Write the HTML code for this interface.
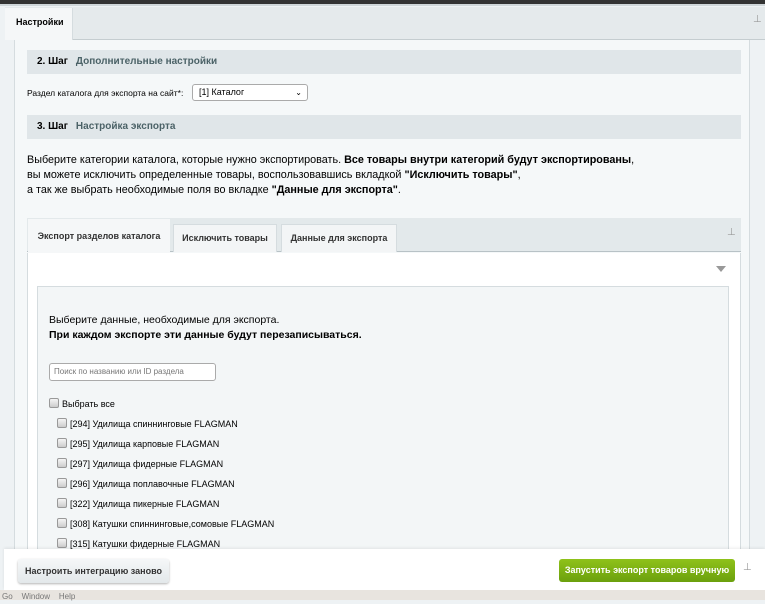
<!DOCTYPE html>
<html><head><meta charset="utf-8"><style>
*{margin:0;padding:0;box-sizing:border-box}
body{width:765px;height:600px;overflow:hidden;background:#eef2f4;font-family:"Liberation Sans",Arial,sans-serif;font-size:12px;color:#000;position:relative}
.abs{position:absolute}
.hdr{position:absolute;left:27px;width:714px;height:24px;background:#e0e6e9;font-size:10px;line-height:24px;padding-left:10px}
.hdr b{margin-right:8px}
.hdr span{color:#4b6267;font-weight:bold}
.cb{display:inline-block;width:10px;height:10px;border:1px solid #999;border-radius:2px;background:linear-gradient(#f5f5f5,#ccc);vertical-align:-1px;margin-right:3px}
.item{position:absolute;left:57px;font-size:9px}
.tab{position:absolute;top:224px;height:28px;background:#f3f5f6;border:1px solid #d5dcdf;border-bottom:none;font-size:9px;font-weight:bold;line-height:26px;text-align:center;color:#333}
</style></head><body>
<div class="abs" style="left:0;top:0;width:765px;height:4px;background:#333"></div>
<div class="abs" style="left:0;top:4px;width:765px;height:2px;background:#cfd6d9"></div>
<div class="abs" style="left:5px;top:7px;width:760px;height:33px;background:#e5eaec;border-bottom:1px solid #c5cdd0"></div>
<div class="abs" style="left:5px;top:8px;width:68px;height:32px;background:#f5f7f8;border-right:1px solid #d5dcdf;font-size:9px;font-weight:bold;line-height:28px;padding-left:11px">Настройки</div>
<div class="abs" style="left:753px;top:14px;font-size:10px;color:#999">⊥</div>
<div class="abs" style="left:14px;top:40px;width:736px;height:510px;background:#f5f8f9;border-left:1px solid #d5dcdf;border-right:1px solid #d5dcdf"></div>
<div class="hdr" style="top:50px"><b>2. Шаг</b><span>Дополнительные настройки</span></div>
<div class="abs" style="left:27px;top:88px;font-size:8.5px">Раздел каталога для экспорта на сайт*:</div>
<div class="abs" style="left:192px;top:84px;width:116px;height:17px;background:#fff;border:1px solid #aaa;border-radius:3px;font-size:9px;line-height:15px;padding-left:6px">[1] Каталог<span style="position:absolute;right:5px;font-size:8px">⌄</span></div>
<div class="hdr" style="top:115px"><b>3. Шаг</b><span>Настройка экспорта</span></div>
<div class="abs" style="left:27px;top:153px;font-size:10.8px;line-height:15px">Выберите категории каталога, которые нужно экспортировать. <b>Все товары внутри категорий будут экспортированы</b>,<br>вы можете исключить определенные товары, воспользовавшись вкладкой <b>"Исключить товары"</b>,<br>а так же выбрать необходимые поля во вкладке <b>"Данные для экспорта"</b>.</div>
<div class="abs" style="left:27px;top:218px;width:714px;height:34px;background:#e3e9eb;border-bottom:1px solid #b8c2c6"></div>
<div class="tab" style="left:28px;top:219px;height:34px;width:142px;background:#f5f7f8;line-height:34px;border:none">Экспорт разделов каталога</div>
<div class="tab" style="left:173px;width:104px">Исключить товары</div>
<div class="tab" style="left:281px;width:116px">Данные для экспорта</div>
<div class="abs" style="left:727px;top:227px;font-size:10px;color:#999">⊥</div>
<div class="abs" style="left:27px;top:253px;width:714px;height:300px;background:#fff;border-left:1px solid #d5dcdf;border-right:1px solid #d5dcdf"></div>
<div class="abs" style="left:716px;top:266px;width:0;height:0;border-left:5px solid transparent;border-right:5px solid transparent;border-top:6px solid #999"></div>
<div class="abs" style="left:37px;top:286px;width:692px;height:270px;background:#f3f6f7;border:1px solid #d5dcdf"></div>
<div class="abs" style="left:49px;top:313px;font-size:10.5px;line-height:15px">Выберите данные, необходимые для экспорта.<br><b>При каждом экспорте эти данные будут перезаписываться.</b></div>
<div class="abs" style="left:49px;top:363px;width:167px;height:18px;background:#fff;border:1px solid #aaa;border-radius:3px;font-size:8px;color:#777;line-height:16px;padding-left:4px">Поиск по названию или ID раздела</div>
<div class="item" style="left:49px;top:398px"><span class="cb"></span>Выбрать все</div>
<div class="item" style="top:418px"><span class="cb"></span>[294] Удилища спиннинговые FLAGMAN</div>
<div class="item" style="top:438px"><span class="cb"></span>[295] Удилища карповые FLAGMAN</div>
<div class="item" style="top:458px"><span class="cb"></span>[297] Удилища фидерные FLAGMAN</div>
<div class="item" style="top:478px"><span class="cb"></span>[296] Удилища поплавочные FLAGMAN</div>
<div class="item" style="top:498px"><span class="cb"></span>[322] Удилища пикерные FLAGMAN</div>
<div class="item" style="top:518px"><span class="cb"></span>[308] Катушки спиннинговые,сомовые FLAGMAN</div>
<div class="item" style="top:538px"><span class="cb"></span>[315] Катушки фидерные FLAGMAN</div>
<div class="abs" style="left:4px;top:549px;width:761px;height:41px;background:#fff;box-shadow:0 -1px 3px rgba(0,0,0,.08)"></div>
<div class="abs" style="left:18px;top:559px;width:151px;height:24px;background:linear-gradient(#f5f7f8,#e3e8ea);border-radius:3px;box-shadow:0 1px 2px rgba(0,0,0,.3);font-size:9px;font-weight:bold;line-height:24px;text-align:center;color:#333">Настроить интеграцию заново</div>
<div class="abs" style="left:559px;top:559px;width:176px;height:23px;background:linear-gradient(#8fc21a,#6ba00d);border-radius:3px;font-size:9px;font-weight:bold;line-height:23px;text-align:center;color:#fff">Запустить экспорт товаров вручную</div>
<div class="abs" style="left:743px;top:562px;font-size:10px;color:#999">⊥</div>
<div class="abs" style="left:0;top:590px;width:765px;height:10px;background:#e8e4df;font-size:8px;color:#777;line-height:14px;padding-left:2px">Go &nbsp;&nbsp; Window &nbsp;&nbsp; Help</div>
</body></html>
